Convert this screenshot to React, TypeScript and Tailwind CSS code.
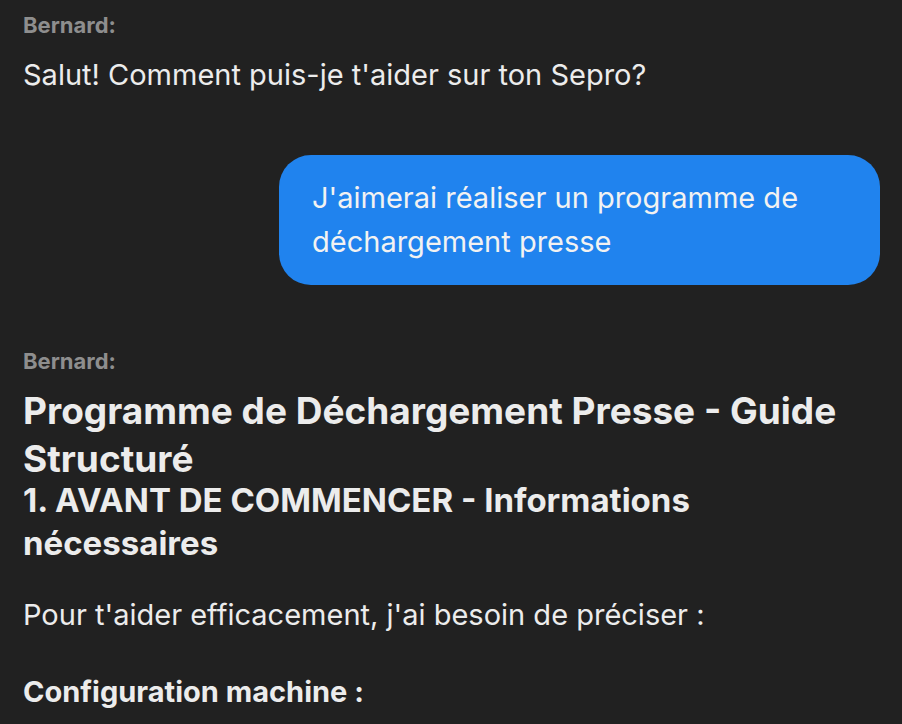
export default function App() {
  return (
    <div
      className="min-h-screen w-full bg-[#212121] text-[#ececec] pl-[23px] pr-[22px] pt-[9px]"
      style={{ fontFamily: "Inter, 'Noto Sans', sans-serif" }}
    >
      {/* Bot message */}
      <div className="flex flex-col">
        <div className="text-[22px] font-bold text-[#8e8e8e] leading-[33px]">Bernard:</div>
        <p className="mt-[11px] text-[29px] leading-[44px]">Salut! Comment puis-je t'aider sur ton Sepro?</p>
      </div>

      {/* User message */}
      <div className="flex justify-end mt-[58px]">
        <div className="w-[601px] rounded-[32px] bg-[#2083ee] px-[33px] py-[21px] text-[29px] leading-[44px] text-[#f2f2f2]">
          J'aimerai réaliser un programme de déchargement presse
        </div>
      </div>

      {/* Bot message */}
      <div className="flex flex-col mt-[60px]">
        <div className="text-[22px] font-bold text-[#8e8e8e] leading-[33px]">Bernard:</div>
        <h1 className="mt-[9px] text-[37px] font-bold leading-[48px]">
          Programme de Déchargement Presse - Guide Structuré
        </h1>
        <h2 className="-mt-[4px] text-[33px] font-bold leading-[43px]">
          1. AVANT DE COMMENCER - Informations nécessaires
        </h2>
        <p className="mt-[28px] text-[29px] leading-[44px]">
          Pour t'aider efficacement, j'ai besoin de préciser :
        </p>
        <p className="mt-[33px] text-[29px] font-bold leading-[44px]">Configuration machine :</p>
      </div>
    </div>
  );
}
